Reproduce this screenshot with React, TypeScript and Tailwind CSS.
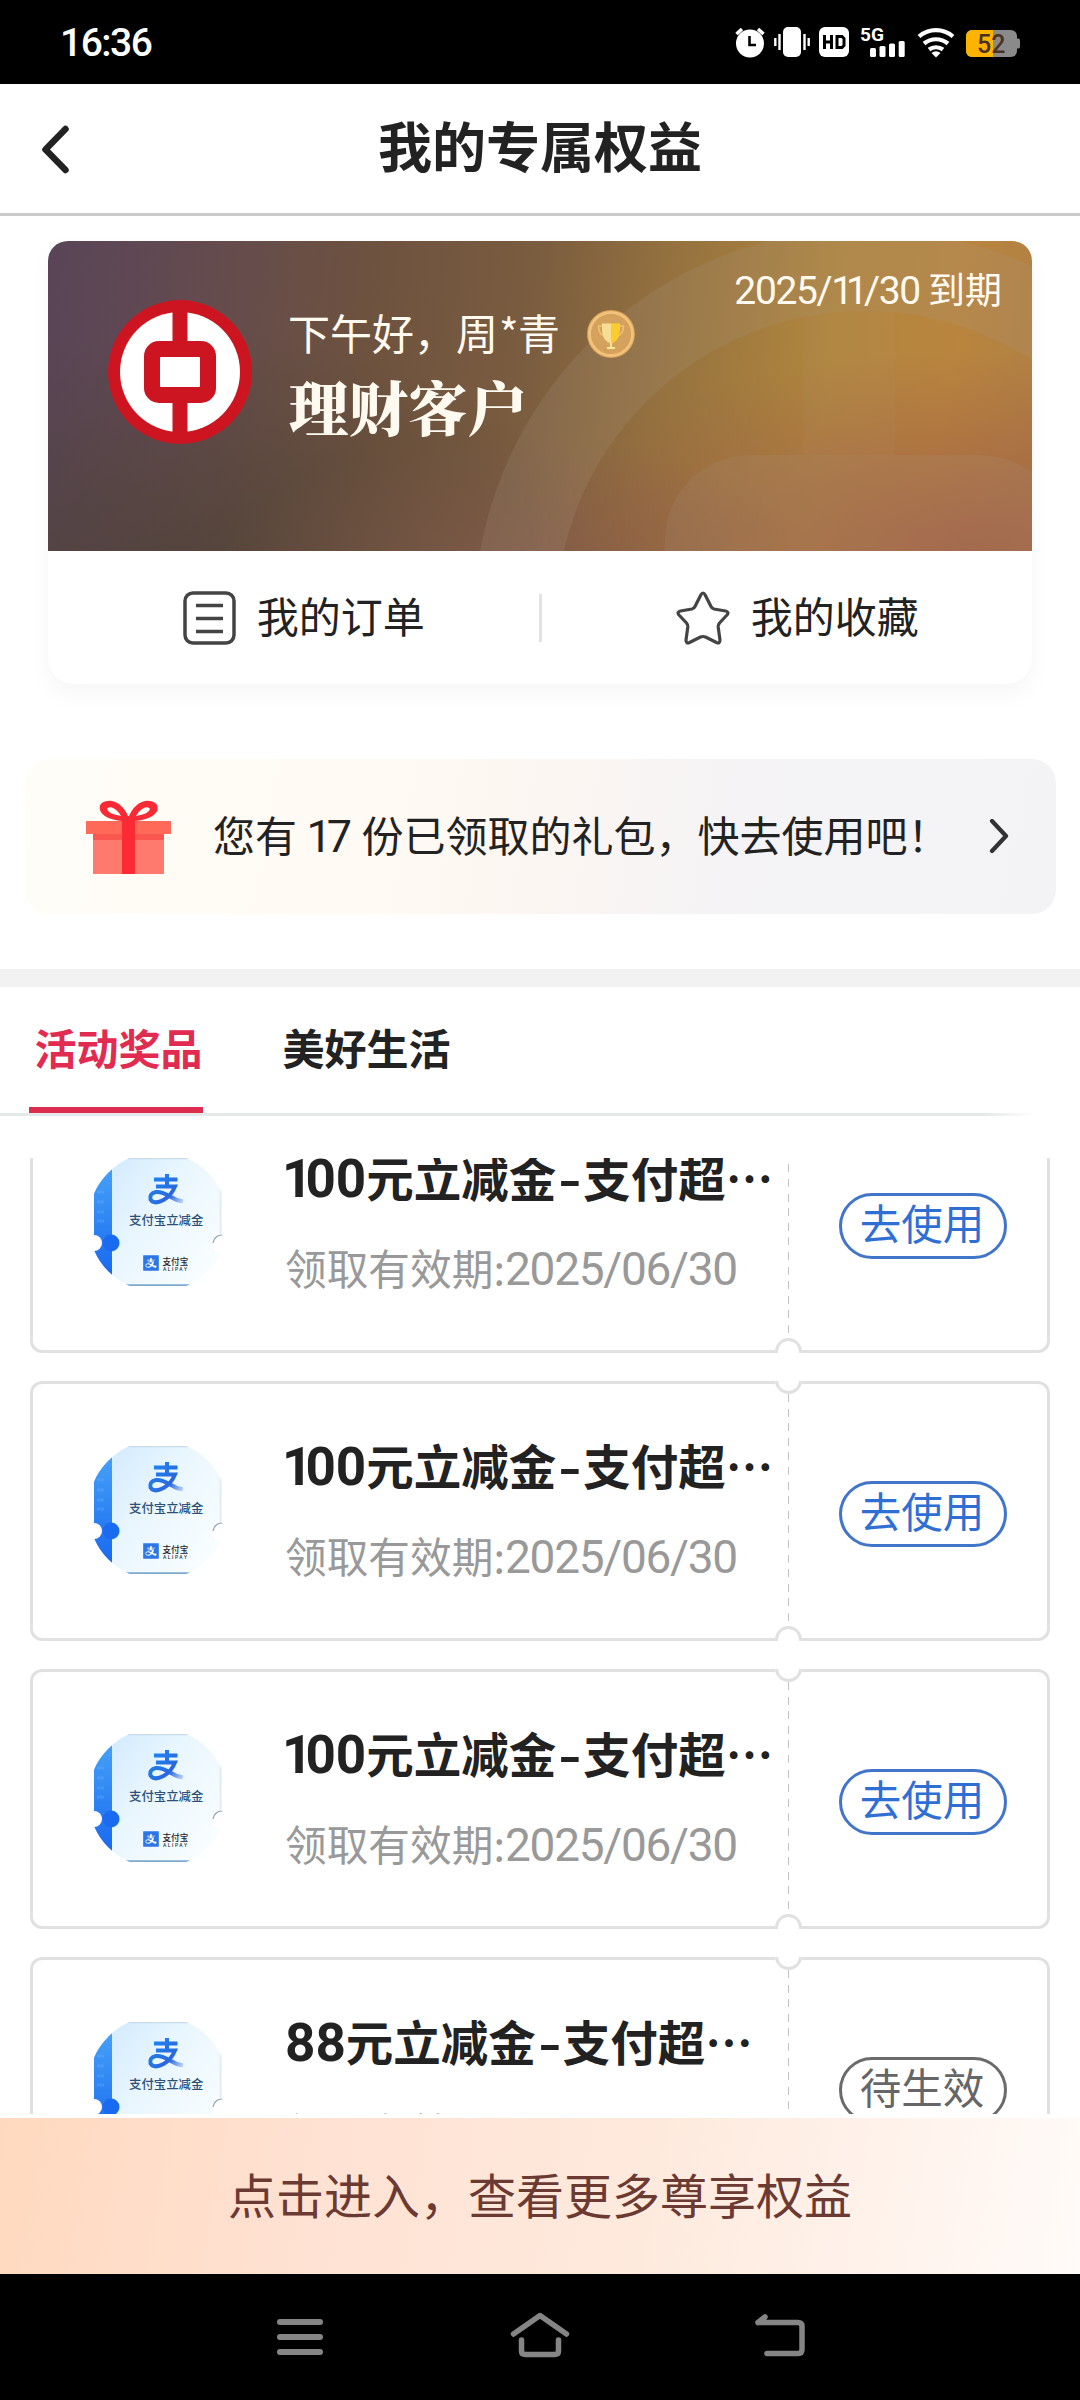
import { type JSX, type ReactNode } from "react";
import { AiFillAlipaySquare } from "react-icons/ai";
import clsx from "clsx";

type Coupon = {
  id: number;
  amount: string;
  expires: string;
  status: "usable" | "pending";
};

const coupons: Coupon[] = [
  { id: 1, amount: "100", expires: "2025/06/30", status: "usable" },
  { id: 2, amount: "100", expires: "2025/06/30", status: "usable" },
  { id: 3, amount: "100", expires: "2025/06/30", status: "usable" },
  { id: 4, amount: "88", expires: "2025/06/30", status: "pending" },
];

const tabs = [
  { label: "活动奖品", active: true },
  { label: "美好生活", active: false },
];

function Num({ className, children }: { className?: string; children: ReactNode }): JSX.Element {
  return <span className={clsx("font-['Roboto',sans-serif] leading-[0]", className)}>{children}</span>;
}

function StatusBar(): JSX.Element {
  return (
    <div className="flex h-[84px] items-center justify-between bg-black pl-[60px] pr-[60px] text-white">
      <span className="pt-[2px] font-['Roboto',sans-serif] text-[39px] font-medium leading-[48px] tracking-[-1.5px]">16:36</span>
      <svg width="286" height="32" viewBox="734 26 286 32" fill="#fff">
        {/* alarm */}
        <circle cx="750" cy="43.5" r="14" />
        <path d="M736.5 34l5.5-5M763.5 34l-5.5-5" stroke="#fff" strokeWidth="3.5" />
        <path d="M749.5 36v9h6.5" fill="none" stroke="#000" strokeWidth="2.6" />
        {/* vibrate */}
        <rect x="783" y="27" width="18" height="30" rx="5" />
        <path d="M779.5 34v16M804.5 34v16M775.3 38v8M808.7 38v8" stroke="#fff" strokeWidth="2.4" />
        {/* HD */}
        <rect x="819" y="27" width="30" height="30" rx="6" />
        <path d="M824.5 35v14M831.5 35v14M824.5 42h7M837 36.5h5l2 2v7l-2 2h-5z" fill="none" stroke="#000" strokeWidth="3" />
        <text x="860" y="41" fontSize="19" fontWeight="700" fontFamily="Roboto" textLength="24" lengthAdjust="spacingAndGlyphs">
          5G
        </text>
        <rect x="870" y="48" width="6" height="9" rx="1.5" />
        <rect x="879.5" y="46" width="6" height="11" rx="1.5" />
        <rect x="889" y="43.5" width="6" height="13.5" rx="1.5" />
        <rect x="898.7" y="41" width="6" height="16" rx="1.5" />
        {/* wifi */}
        <path d="M919 36.5a26 26 0 0 1 34 0M924 43.5a19 19 0 0 1 24 0M929 49.5a12 12 0 0 1 14 0" fill="none" stroke="#fff" strokeWidth="4.2" />
        <path d="M936 57.5l-4.5-4.5a7 7 0 0 1 9 0z" />
        {/* battery */}
        <rect x="966" y="30" width="51" height="27" rx="6" fill="#8a8a8a" />
        <path d="M1016 38.5h2.5q1.5 0 1.5 2v6q0 2-1.5 2h-2.5z" fill="#8a8a8a" />
        <path d="M972 30h21v27h-21a6 6 0 0 1-6-6v-15a6 6 0 0 1 6-6z" fill="#fdb400" />
        <text x="977" y="52.5" fontSize="25" fontWeight="500" fontFamily="Roboto" fill="#4a3222">
          52
        </text>
      </svg>
    </div>
  );
}

function TitleBar(): JSX.Element {
  return (
    <header className="flex h-[132px] items-center border-b-[3px] border-[#cbcbcb]">
      <button className="flex w-[140px] pl-[40px]">
        <svg width="30" height="50" viewBox="0 0 30 50" fill="none" stroke="#222" strokeWidth="6.5" strokeLinecap="round" strokeLinejoin="round">
          <path d="M25.5 5L5.5 25.5l20 20.5" />
        </svg>
      </button>
      <h1 className="flex-1 pb-[7px] text-center text-[54px] font-bold leading-none">我的专属权益</h1>
      <div className="w-[140px]" />
    </header>
  );
}

function BankLogo(): JSX.Element {
  return (
    <svg className="h-[144px] w-[144px]" viewBox="0 0 144 144">
      <circle cx="72" cy="72" r="72" fill="#cd1521" />
      <circle cx="72" cy="72" r="60" fill="#fff" />
      <path d="M72 8v128" stroke="#cd1521" strokeWidth="15" />
      <rect x="36" y="41" width="72" height="62" rx="15" fill="#cd1521" />
      <rect x="52" y="57" width="40" height="30" rx="1" fill="#fff" />
    </svg>
  );
}

function Medal(): JSX.Element {
  return (
    <svg className="h-[48px] w-[48px]" viewBox="0 0 48 48">
      <circle cx="24" cy="24" r="24" fill="#d9a056" />
      <circle cx="24" cy="24" r="21.5" fill="none" stroke="#f0c27c" strokeWidth="3" />
      <circle cx="24" cy="24" r="19.5" fill="#d5a25e" />
      <path d="M16 16h-4.5q0 8 6 10M32 16h4.5q0 8-6 10" fill="none" stroke="#ecc273" strokeWidth="1.5" />
      <path d="M15 13.5h9v20q-9-3-9-14z" fill="#f8dc92" />
      <path d="M33 13.5h-9v20q9-3 9-14z" fill="#fccb2f" />
      <path d="M24 32v5M20 38h8" stroke="#fde49a" strokeWidth="2" />
    </svg>
  );
}

function MemberCard(): JSX.Element {
  return (
    <section className="mx-[48px] mt-[25px] overflow-hidden rounded-t-[20px] rounded-b-[26px] bg-white shadow-[0_10px_24px_rgba(0,0,0,0.04)]">
      <div className="relative h-[310px] bg-[radial-gradient(ellipse_460px_200px_at_94%_100%,rgba(160,92,70,0.85),rgba(160,92,70,0)),radial-gradient(ellipse_300px_130px_at_48%_105%,rgba(130,90,76,0.7),rgba(130,90,76,0)),radial-gradient(ellipse_420px_260px_at_14%_112%,rgba(74,64,50,0.7),rgba(74,64,50,0)),linear-gradient(96deg,#594558_0%,#634a50_14%,#6d523f_32%,#7a5c3f_48%,#95723f_62%,#b1863e_78%,#b9853e_90%,#b08044_100%)]">
        {/* watermark of the bank logo, cropped by the card */}
        <svg className="absolute inset-0" width="984" height="310" viewBox="48 241 984 310">
          <g fill="none" stroke="#a89682" strokeOpacity="0.2">
            <circle cx="865" cy="620" r="350" strokeWidth="82" />
          </g>
          <path d="M803 311h92v144h-92z" fill="#b9a08a" fillOpacity="0.07" />
          <rect x="665" y="455" width="400" height="344" rx="85" fill="#a89682" fillOpacity="0.17" />
        </svg>
        <div className="relative flex text-[#fffaf0]">
          <div className="pl-[60px] pt-[59px]">
            <BankLogo />
          </div>
          <div className="flex-1 pl-[36px] pt-[68px]">
            <div className="flex h-[50px] items-center text-[42px] leading-none">
              <span className="pb-[4px]">
                下午好，周<span className="mx-px inline-block w-[18px]">*</span>青
              </span>
              <span className="ml-[27px]">
                <Medal />
              </span>
            </div>
            <p className="mt-[17px] pl-px font-['Noto_Serif_CJK_SC','Source_Han_Serif_SC','Noto_Sans_CJK_SC',serif] text-[59.5px] font-black leading-[60px]">
              理财客户
            </p>
          </div>
          <p className="pr-[30px] pt-[27px] text-[37px] leading-[40px]">
            <Num className="text-[39px] tracking-[-1.4px]">
              2025/<span className="tracking-[-7px]">11</span>
              <span className="ml-[3px]">/30</span>
            </Num>{" "}
            到期
          </p>
        </div>
      </div>
      <div className="flex h-[133px] items-center text-[42px] leading-none">
        <div className="flex flex-1 items-center justify-center gap-[21px] pl-[21px]">
          <svg width="53" height="54" viewBox="0 0 53 54" fill="none" stroke="#444" strokeWidth="3.5">
            <rect x="2" y="2" width="49" height="50" rx="8" />
            <path d="M13 14.5h27M13 27.5h27M13 40.5h27" />
          </svg>
          <span className="pb-[6px]">我的订单</span>
        </div>
        <div className="h-[48px] w-[3px] bg-[#e2e2e2]" />
        <div className="flex flex-1 items-center justify-center gap-[21px] pl-[21px]">
          <svg width="54" height="54" viewBox="0 0 54 54" fill="none" stroke="#444" strokeWidth="3.2" strokeLinejoin="round">
            <path d="M24.8 4Q27 0 29.2 4L35 15.5Q36 17.5 38 18L49.5 20Q53.5 21 51 24L43.5 32Q42 34 42.2 36L44 49Q44 53 40.5 51.5L29.5 46Q27 45 24.5 46L13.5 51.5Q10 53 10 49L11.8 36Q12 34 10.5 32L3 24Q.5 21 4.5 20L16 18Q18 17.5 19 15.5Z" />
          </svg>
          <span className="pb-[6px]">我的收藏</span>
        </div>
      </div>
    </section>
  );
}

function GiftBanner(): JSX.Element {
  return (
    <section className="ml-[25px] mr-[24px] mt-[75px] flex h-[155px] items-center rounded-[24px] bg-[linear-gradient(100deg,#fffdf8_0%,#fffaf3_35%,#fcf6f2_50%,#f5f3f5_68%,#f3f3f6_100%)] pl-[61px] pr-[47px]">
      <svg width="85" height="74" viewBox="0 0 85 74">
        <rect x="7" y="33" width="71" height="41" fill="#ff7a6e" />
        <rect y="21" width="85" height="13" fill="#ff6a58" />
        <rect x="7" y="34" width="71" height="6" fill="#fa5650" />
        <rect x="36" y="16" width="13" height="58" fill="#fb2a34" />
        <path d="M42.5 17Q36 2 24 .8Q12 1 14 10Q17 19 36 21H49Q68 19 71.500 10Q73 1 61 .8Q49 2 42.500 17ZM35 16Q22 14 21 9Q22 6.500 26 7.500Q32 10 35 16ZM50 16Q53 10 59 7.500Q63 6.500 64 9Q63 14 50 16Z" fill="#f72a36" fillRule="evenodd" />
      </svg>
      <p className="ml-[42px] flex-1 whitespace-nowrap pb-[6px] text-[42px] leading-[50px]">
        您有{" "}
        <Num className="text-[45px]">
          <span className="tracking-[-5px]">1</span>7
        </Num>{" "}
        份已领取的礼包，快去使用吧！
      </p>
      <svg width="20" height="36" viewBox="0 0 20 36" fill="none" stroke="#333" strokeWidth="4.2" strokeLinecap="round" strokeLinejoin="round">
        <path d="M3 2l14 15L3 32" />
      </svg>
    </section>
  );
}

function AlipayTicket(): JSX.Element {
  return (
    <svg className="h-[128px] w-[128px]" viewBox="0 0 128 128">
      <defs>
        <clipPath id="ticket-clip">
          <circle cx="64" cy="64" r="70" />
        </clipPath>
        <linearGradient id="ticket-stub" x1="0" y1="0" x2="0" y2="1">
          <stop offset="0" stopColor="#4aa6f8" />
          <stop offset="1" stopColor="#1463ef" />
        </linearGradient>
        <linearGradient id="ticket-face" x1="0" y1="0" x2="1" y2="0.7">
          <stop offset="0" stopColor="#cde8fd" />
          <stop offset="0.5" stopColor="#e9f6fe" />
          <stop offset="1" stopColor="#f8fdff" />
        </linearGradient>
        <linearGradient id="ticket-mark" gradientUnits="userSpaceOnUse" x1="56" y1="16" x2="90" y2="46">
          <stop offset="0" stopColor="#1a8af5" />
          <stop offset="0.65" stopColor="#2b68dd" />
          <stop offset="1" stopColor="#d5e6f8" />
        </linearGradient>
      </defs>
      <g clipPath="url(#ticket-clip)">
        <rect width="128" height="128" fill="url(#ticket-face)" />
        <rect width="18" height="128" fill="url(#ticket-stub)" />
        <path d="M3 34h7M3 44h7M3 54h7M3 63h7" stroke="#7cbcff" strokeOpacity="0.25" strokeWidth="3" />
        <circle cx="17" cy="85" r="8.5" fill="#1a6bf0" />
        <circle cx="0" cy="85" r="8" fill="#fff" />
        <path d="M128 76a9.5 9.5 0 0 0 0 20z" fill="#fff" />
        <path d="M128 77a9 9 0 0 0-9 8" fill="none" stroke="#8ba2b4" strokeWidth="1.2" />
        <path d="M0 127.5h128" stroke="#7ea9cf" strokeWidth="2.5" />
        <path d="M0 .5h128" stroke="#c8dce9" strokeWidth="1.5" />
        <path d="M126.5 0v76" stroke="#e2eef4" strokeWidth="2" />
      </g>
      <g fill="none" stroke="url(#ticket-mark)" strokeWidth="4">
        <path d="M60 21.5L83.5 21.4M73 16v12.5M62 28.5H81Q77 38 69.5 42Q60 47 56.5 41.5Q55 35.5 62 34Q68 33.5 76 38.5Q82 42.5 89 43.5" />
      </g>
      <text x="35" y="66.5" fontSize="12.4" fontWeight="500" fill="#2c4f77" fontFamily="Noto Sans CJK SC">
        支付宝立减金
      </text>
      <rect x="51" y="99" width="12" height="12" fill="#fff" />
      <AiFillAlipaySquare x="47" y="95" size={20} color="#2c76e8" />
      <text x="68.5" y="107" fontSize="8.6" fontWeight="500" fill="#222" fontFamily="Noto Sans CJK SC">
        支付宝
      </text>
      <text x="69" y="112.5" fontSize="5" fontWeight="500" fill="#333" fontFamily="Roboto" textLength="24">
        ALIPAY
      </text>
    </svg>
  );
}

function CouponCard({ coupon }: { coupon: Coupon }): JSX.Element {
  const usable = coupon.status === "usable";
  return (
    <article className="relative flex h-[260px] shrink-0 rounded-[12px] border-[3px] border-[#e1e1e1] bg-white">
      <div className="pl-[61px] pt-[62px]">
        <AlipayTicket />
      </div>
      <div className="ml-[63px] w-[503px] whitespace-nowrap pt-[54px]">
        <h3 className="h-[54px] text-[47.5px] font-bold leading-[54px]">
          <Num className="text-[53px]">
            {coupon.amount.startsWith("1") ? (
              <>
                <span className="-ml-[3px] tracking-[-7px]">1</span>
                {coupon.amount.slice(1)}
              </>
            ) : (
              coupon.amount
            )}
          </Num>
          元立减金
          <span className="mx-[2px] inline-block w-[23px] origin-left scale-x-[1.35]">-</span>
          支付超…
        </h3>
        <p className="mt-[39px] h-[48px] text-[41.7px] leading-[48px] text-[#999]">
          领取有效期:<Num className="text-[46px] tracking-[-1.3px]">{coupon.expires}</Num>
        </p>
      </div>
      <div className="flex flex-1 items-center justify-center pl-[10px] pt-[6px]">
        <button
          className={clsx(
            "flex h-[66px] w-[168px] items-center justify-center rounded-full border-[3px] pb-[6px] pr-px text-[41.5px] leading-none",
            usable ? "border-[#4175c9] text-[#2f6fd3]" : "border-[#6b6b6b] text-[#666]",
          )}
        >
          {usable ? "去使用" : "待生效"}
        </button>
      </div>
      {/* perforation between the coupon and its stub */}
      <div className="absolute left-[755px] top-[10px] bottom-[10px] w-px bg-[repeating-linear-gradient(to_bottom,#c2c2c2_0_8px,transparent_8px_14.6px)]" />
      <div className="absolute -top-[3px] left-[742px] h-[13px] w-[27px] overflow-hidden bg-white">
        <div className="-mt-[14px] h-[27px] w-[27px] rounded-full border-[3px] border-[#e1e1e1]" />
      </div>
      <div className="absolute -bottom-[3px] left-[742px] h-[15px] w-[27px] overflow-hidden bg-white">
        <div className="h-[27px] w-[27px] rounded-full border-[3px] border-[#e1e1e1]" />
      </div>
    </article>
  );
}

function NavBar(): JSX.Element {
  return (
    <nav className="flex h-[126px] items-center justify-center gap-[180px] bg-black">
      <svg width="60" height="50" viewBox="0 0 60 50" fill="none" stroke="#858585" strokeWidth="6" strokeLinecap="round">
        <path d="M10 10h40M10 25h40M10 40h40" />
      </svg>
      <svg width="60" height="50" viewBox="0 0 60 50" fill="none" stroke="#858585" strokeWidth="5.5" strokeLinecap="round" strokeLinejoin="round">
        <path d="M3.5 22L30 3.5l26.5 18.5M11.5 28v11q0 3.5 4 3.5h29q4 0 4-3.5v-11" />
      </svg>
      <svg width="60" height="50" viewBox="0 0 60 50" fill="none" stroke="#858585" strokeWidth="5.5" strokeLinecap="round" strokeLinejoin="round">
        <path d="M8 10.5h40q4 0 4 4v23q0 4-4 4H17M15 5L8 10.5" />
      </svg>
    </nav>
  );
}

export default function App(): JSX.Element {
  return (
    <div className="flex h-[2400px] w-[1080px] flex-col overflow-hidden bg-white font-['Noto_Sans_CJK_SC',sans-serif] text-[#222]">
      <StatusBar />
      <TitleBar />
      <MemberCard />
      <GiftBanner />

      <div className="mt-[55px] h-[18px] bg-[#f2f2f2]" />

      {/* Tabs */}
      <div className="relative flex h-[129px] gap-[74px] pl-[29px] text-[42px] font-bold">
        {tabs.map((tab) => (
          <button
            key={tab.label}
            className={clsx(
              "h-[126px] w-[174px] whitespace-nowrap border-b-[6px] pl-[5px] leading-none",
              tab.active ? "border-[#dc2d4f] text-[#e22b50]" : "border-transparent",
            )}
          >
            {tab.label}
          </button>
        ))}
        <div className="absolute bottom-0 left-0 h-[3px] w-[1035px] bg-[linear-gradient(to_right,#e4e8e8_95%,transparent)]" />
      </div>

      {/* Coupon list, scrolled part way */}
      <main className="mt-[42px] h-[956px] overflow-hidden px-[30px]">
        <div className="-mt-[65px] flex flex-col gap-[28px]">
          {coupons.map((coupon) => (
            <CouponCard key={coupon.id} coupon={coupon} />
          ))}
        </div>
      </main>

      <button className="mt-[4px] flex h-[156px] items-center justify-center bg-[linear-gradient(100deg,#ffd9bf_0%,#ffe2d3_30%,#feeadd_60%,#fff4ee_85%,#fffbf8_100%)] pb-[6px] text-[48px] leading-none text-[#6b3a33]">
        点击进入，查看更多尊享权益
      </button>
      <NavBar />
    </div>
  );
}
